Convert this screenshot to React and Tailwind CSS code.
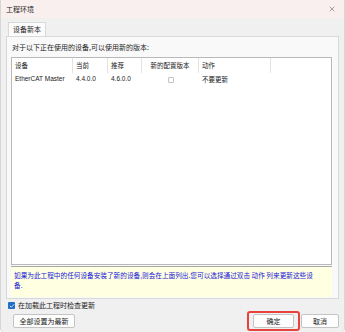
import { X, Check } from "lucide-react";

const cjk = { fontFamily: '"Noto Sans CJK SC", "Noto Sans", sans-serif' };

function Btn({ children, className = "" }) {
  return (
    <button
      className={`h-[14px] flex items-center justify-center rounded-[2px] border border-[#c4c4c4] bg-[#fdfdfd] text-[7px] leading-none text-[#1a1a1a] ${className}`}
      style={cjk}
    >
      {children}
    </button>
  );
}

export default function App() {
  const cols = [
    { label: "设备", w: "w-[61px]" },
    { label: "当前", w: "w-[35px]" },
    { label: "推荐", w: "w-[34px]" },
    { label: "新的配置版本", w: "w-[57px]", center: true },
    { label: "动作", w: "w-[72px]" },
  ];

  return (
    <div
      className="w-[345px] h-[332px] bg-[#f0f0f0] flex flex-col overflow-hidden border-x border-[#d6d6d6] rounded-b-[4px]"
      style={cjk}
    >
      {/* title bar */}
      <div className="h-[18px] shrink-0 bg-[#f8efee] flex items-center justify-between pl-[5px] pr-[8px]">
        <span className="text-[7px] leading-none text-[#1f1f1f]">工程环境</span>
        <X size={8} strokeWidth={1.4} className="text-[#444]" />
      </div>

      {/* tab strip */}
      <div className="mt-[4px] pl-[7px] flex">
        <div className="h-[14px] px-[4px] bg-[#fbfbfb] border border-b-0 border-[#d9d9d9] flex items-center text-[7px] leading-none text-[#1f1f1f]">
          设备新本
        </div>
      </div>

      {/* tab page */}
      <div className="mx-[5px] h-[263px] bg-[#f9f9f9] border border-[#d9d9d9] pl-[4px] pr-[6px] flex flex-col">
        <div className="h-[20px] flex items-center pl-[1px] text-[7px] leading-none text-[#1f1f1f]">
          对于以下正在使用的设备,可以使用新的版本:
        </div>

        {/* list */}
        <div className="h-[208px] bg-white border border-[#b9b9b9] flex flex-col">
          <div className="h-[15px] flex items-stretch">
            {cols.map((c) => (
              <div
                key={c.label}
                className={`${c.w} border-r border-[#e3e3e3] flex items-center text-[6.5px] leading-none text-[#222] ${
                  c.center ? "justify-center" : "pl-[3px]"
                }`}
              >
                {c.label}
              </div>
            ))}
          </div>
          <div
            className="h-[13px] flex items-center text-[6.5px] leading-none text-[#222]"
            style={{ fontFamily: '"Liberation Sans", "Noto Sans CJK SC", sans-serif' }}
          >
            <div className="w-[61px] pl-[3px]">EtherCAT Master</div>
            <div className="w-[35px] pl-[3px]">4.4.0.0</div>
            <div className="w-[34px] pl-[3px]">4.6.0.0</div>
            <div className="w-[57px] flex justify-center">
              <div className="w-[6px] h-[6px] rounded-[1px] border border-[#c2c2c2] bg-white" />
            </div>
            <div className="pl-[3px]" style={cjk}>不要更新</div>
          </div>
        </div>

        {/* info box */}
        <div className="mt-[1px] h-[31px] bg-[#ffffe1] border-t border-[#a8a8a8] pl-[3px] pt-[3px] text-[6.65px] leading-[10px] text-[#2020d8]">
          <div className="whitespace-nowrap">
            如果为此工程中的任何设备安装了新的设备,则会在上面列出.您可以选择通过双击 动作 列来更新这些设
          </div>
          <div>备.</div>
        </div>
      </div>

      {/* check row */}
      <div className="mt-[2px] h-[9px] pl-[7px] flex items-center gap-[3px]">
        <div className="w-[7px] h-[7px] rounded-[1px] bg-[#1f6fc9] flex items-center justify-center">
          <Check size={6} strokeWidth={3} className="text-white" />
        </div>
        <span className="text-[7px] leading-none text-[#1f1f1f]">在加载此工程时检查更新</span>
      </div>

      {/* buttons */}
      <div className="mt-[1px] pl-[12px] pr-[5px] flex items-center">
        <Btn className="w-[62px]">全部设置为最新</Btn>
        <div className="ml-auto border-2 border-[#e8423c] rounded-[3px] px-[4px] py-[1px]">
          <Btn className="w-[41px] bg-[#e0eef9] border-[#5b9bd5]">确定</Btn>
        </div>
        <Btn className="ml-[1px] w-[38px]">取消</Btn>
      </div>
    </div>
  );
}
